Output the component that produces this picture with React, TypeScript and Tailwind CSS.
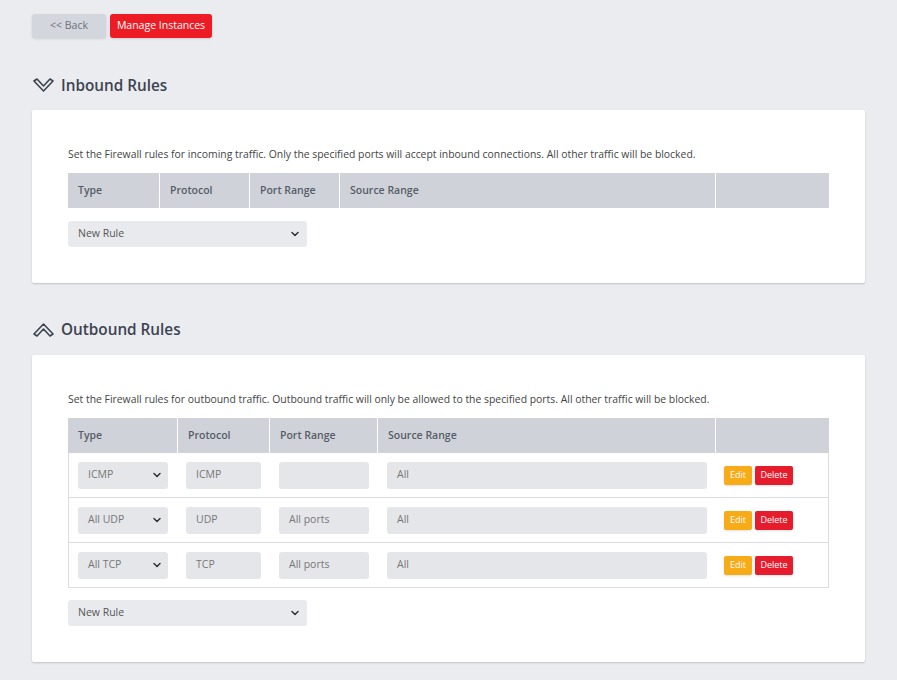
import { ChevronDown } from 'lucide-react'

type Rule = { type: string; protocol: string; port: string; source: string }

const outboundRules: Rule[] = [
  { type: 'ICMP', protocol: 'ICMP', port: '', source: 'All' },
  { type: 'All UDP', protocol: 'UDP', port: 'All ports', source: 'All' },
  { type: 'All TCP', protocol: 'TCP', port: 'All ports', source: 'All' },
]

function Chevron({ up }: { up?: boolean }) {
  return (
    <svg width="21" height="15" viewBox="0 0 21 15" className="shrink-0">
      <path
        d={up ? 'M1 12 L10.5 2 L20 12 L17 14 L10.5 7 L4 14 Z' : 'M1 3 L10.5 13 L20 3 L17 1 L10.5 8 L4 1 Z'}
        fill="none"
        stroke="#3d4451"
        strokeWidth="1.6"
        strokeLinejoin="round"
      />
    </svg>
  )
}

function SectionTitle({ title, up }: { title: string; up?: boolean }) {
  return (
    <div className="flex items-center gap-[7px] h-[22px] pl-px">
      <Chevron up={up} />
      <h2 className="text-[15.3px] font-semibold text-[#3d4451] leading-[22px]">{title}</h2>
    </div>
  )
}

function NewRule() {
  return (
    <div className="mt-[13px] w-[239px] h-[26px] rounded-[3px] bg-[#e9eaed] flex items-center justify-between pl-[10px] pr-[6px] text-[10.5px] text-[#555]">
      <span>New Rule</span>
      <ChevronDown className="w-3 h-3 text-[#333]" strokeWidth={3} />
    </div>
  )
}

function Field({ value, w, select }: { value: string; w: string; select?: boolean }) {
  return (
    <div className={`${w} h-[27px] rounded-[3px] bg-[#e4e6ea] flex items-center justify-between pl-[10px] pr-[5px] text-[10.5px] text-[#777]`}>
      <span>{value}</span>
      {select && <ChevronDown className="w-3 h-3 text-[#333]" strokeWidth={3} />}
    </div>
  )
}

function Header({ widths }: { widths: string[] }) {
  const labels = ['Type', 'Protocol', 'Port Range', 'Source Range', '']
  return (
    <div className="flex h-[35px] bg-[#cfd2d9]">
      {labels.map((l, i) => (
        <div
          key={i}
          className={`${widths[i]} ${i > 0 ? 'border-l-[1.5px] border-white' : ''} flex items-center pl-[10px] text-[10.5px] font-semibold text-[#565d68]`}
        >
          {l}
        </div>
      ))}
    </div>
  )
}

export default function App() {
  const inW = ['w-[91px]', 'w-[90px]', 'w-[90px]', 'w-[376px]', 'flex-1']
  const outW = ['w-[109px]', 'w-[92px]', 'w-[108px]', 'w-[338px]', 'flex-1']

  return (
    <div className="min-h-[680px] bg-[#ebecef] pl-8 pr-8 pt-[14px] pb-4" style={{ fontFamily: '"Open Sans", "Noto Sans", sans-serif' }}>
      <div className="flex gap-1">
        <button className="w-[74px] h-6 rounded-[3px] bg-[#d3d6dc] text-[10.5px] text-[#6b7280] shadow-sm">&lt;&lt; Back</button>
        <button className="w-[102px] h-6 rounded-[3px] bg-[#ed1c24] text-[10.5px] text-white shadow-sm">Manage Instances</button>
      </div>

      <div className="mt-9 mb-[14px]">
        <SectionTitle title="Inbound Rules" />
      </div>
      <div className="bg-white rounded-[2px] shadow-[0_1px_2px_rgba(0,0,0,0.18)] p-9 w-[833px]">
        <p className="text-[10.4px] leading-4 text-[#444] mb-[11px]">
          Set the Firewall rules for incoming traffic. Only the specified ports will accept inbound connections. All other traffic will be blocked.
        </p>
        <Header widths={inW} />
        <NewRule />
      </div>

      <div className="mt-[35px] mb-[15px]">
        <SectionTitle title="Outbound Rules" up />
      </div>
      <div className="bg-white rounded-[2px] shadow-[0_1px_2px_rgba(0,0,0,0.18)] p-9 w-[833px]">
        <p className="text-[10.4px] leading-4 text-[#444] mb-[11px]">
          Set the Firewall rules for outbound traffic. Outbound traffic will only be allowed to the specified ports. All other traffic will be blocked.
        </p>
        <Header widths={outW} />
        <div className="border-x border-[#dcdde0]">
          {outboundRules.map((r) => (
            <div key={r.type} className="flex h-[45px] items-center border-b border-[#dcdde0]">
              <div className={`${outW[0]} pl-[9px]`}>
                <Field value={r.type} w="w-[90px]" select />
              </div>
              <div className={`${outW[1]} pl-[8px]`}>
                <Field value={r.protocol} w="w-[75px]" />
              </div>
              <div className={`${outW[2]} pl-[9px]`}>
                <Field value={r.port} w="w-[90px]" />
              </div>
              <div className={`${outW[3]} pl-[9px]`}>
                <Field value={r.source} w="w-[320px]" />
              </div>
              <div className="flex-1 pl-2 flex gap-[3px]">
                <button className="w-7 h-[19px] rounded-[2px] bg-[#f6ab17] text-[9px] text-white shadow-sm">Edit</button>
                <button className="w-[38px] h-[19px] rounded-[2px] bg-[#e61b2b] text-[9px] text-white shadow-sm">Delete</button>
              </div>
            </div>
          ))}
        </div>
        <div className="-mt-px">
          <NewRule />
        </div>
      </div>
    </div>
  )
}
